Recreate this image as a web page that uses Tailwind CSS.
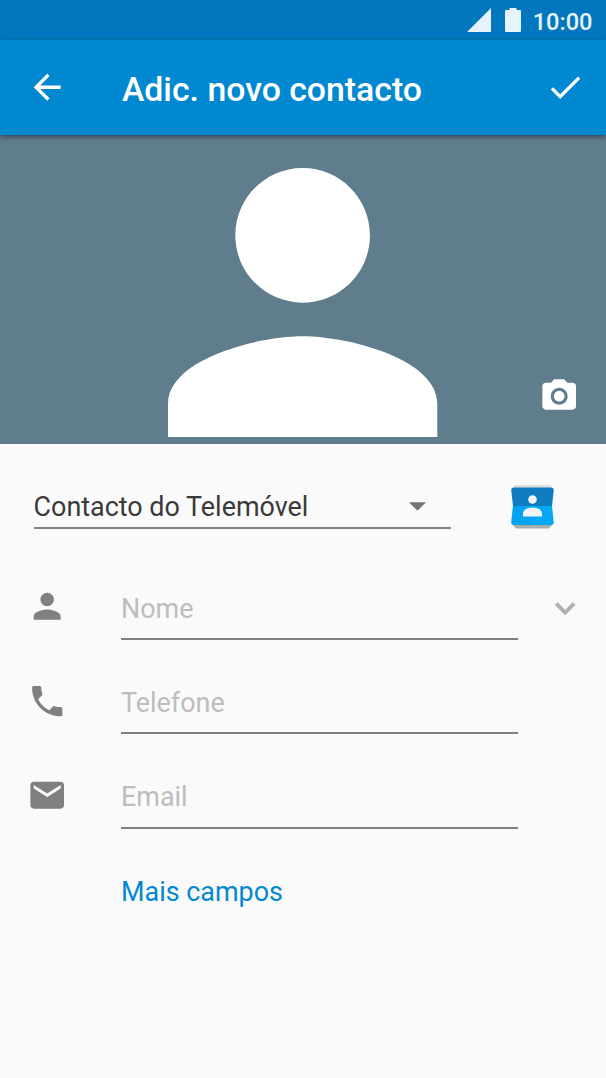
<!DOCTYPE html>
<html lang="pt">
<head>
    <meta charset="UTF-8">
    <meta name="viewport" content="width=device-width, initial-scale=1.0">
    <title>Adic. novo contacto</title>
    <script src="https://cdn.jsdelivr.net/npm/@tailwindcss/browser@4"></script>
</head>
<body class="bg-[#fafafa] font-[Roboto,sans-serif] text-[26.93px] overflow-hidden">

    <div class="w-[606px] h-[1078px] flex flex-col">

        <!-- Status bar -->
        <div class="h-10 shrink-0 bg-[#0277bd] flex items-center justify-end pr-[13.5px] text-[#e6f3fb]">
            <svg class="w-6 h-6 mr-[14px]" viewBox="0 0 24 24" fill="currentColor"><path d="M24 0v24H0z"/></svg>
            <svg class="w-4 h-6 mr-3" viewBox="0 0 16 24" fill="currentColor"><path d="M4.500 0h7v2H15a1 1 0 0 1 1 1v20a1 1 0 0 1-1 1H1a1 1 0 0 1-1-1V3a1 1 0 0 1 1-1h3.500z"/></svg>
            <span class="text-[23.57px] leading-10 font-medium pt-[3px]">10:00</span>
        </div>

        <!-- App bar -->
        <header class="relative z-10 h-[94.5px] shrink-0 bg-[#0288d1] text-white flex items-center pl-[27px] pr-[20.5px] shadow-[0_2px_5px_rgba(0,0,0,0.45)]">
            <button class="mr-[54.5px]">
                <svg class="w-[40.4px] h-[40.4px]" viewBox="0 0 24 24" fill="currentColor"><path d="M20 11H7.830l5.590-5.590L12 4l-8 8 8 8 1.410-1.410L7.830 13H20v-2z"/></svg>
            </button>
            <h1 class="flex-1 text-[33.8px] leading-10 font-medium pt-[6px] whitespace-nowrap">Adic. novo contacto</h1>
            <button>
                <svg class="w-[40.4px] h-[40.4px]" viewBox="0 0 24 24" fill="currentColor"><path d="M9 16.170L4.830 12l-1.420 1.410L9 19 21 7l-1.410-1.410z"/></svg>
            </button>
        </header>

        <!-- Photo -->
        <div class="relative h-[309px] shrink-0 bg-[#607d8d] flex justify-center pt-[33.5px]">
            <svg class="w-[269.3px] h-[269.3px]" viewBox="4 4 16 16" fill="#fff"><path d="M12 12c2.210 0 4-1.790 4-4s-1.790-4-4-4-4 1.790-4 4 1.790 4 4 4zm0 2c-2.670 0-8 1.340-8 4v2h16v-2c0-2.660-5.330-4-8-4z"/></svg>
            <button class="absolute right-[27px] bottom-[27px] text-white">
                <svg class="w-[40.4px] h-[40.4px]" viewBox="0 0 24 24" fill="currentColor"><circle cx="12" cy="12" r="3.200"/><path d="M9 2L7.170 4H4c-1.100 0-2 .9-2 2v12c0 1.100.9 2 2 2h16c1.100 0 2-.9 2-2V6c0-1.100-.9-2-2-2h-3.170L15 2H9zm3 15c-2.760 0-5-2.240-5-5s2.240-5 5-5 5 2.240 5 5-2.240 5-5 5z"/></svg>
            </button>
        </div>

        <!-- Account picker -->
        <div class="h-[116px] shrink-0 flex items-start pl-[33.5px] pt-[40px]">
            <div class="w-[417px] h-[45.5px] flex items-center justify-between border-b-2 border-[#848484] text-[#3a3a3a] pr-[25px]">
                <span class="leading-[44px] pt-1 whitespace-nowrap">Contacto do Telemóvel</span>
                <svg class="w-[17px] h-[9px] mt-[3px]" viewBox="0 0 10 5" fill="#757575"><path d="M0 0h10L5 5z"/></svg>
            </div>
            <svg class="w-[45px] h-[46px] ml-[59px]" viewBox="0 0 45 46">
                <path d="M5 1h35l3 4H2z" fill="#dedede"/>
                <path d="M2 40h41l-4 4.500H6z" fill="#a9adb0"/>
                <path d="M4 3.500h37q3 0 2.700 3L42 22H3L1.300 6.500Q1 3.500 4 3.500z" fill="#0f7bc1"/>
                <path d="M3 22h39l1.700 16q.3 3-2.700 3H4q-3 0-2.700-3z" fill="#03a9f4"/>
                <path d="M3 22h10l10 10v9H4q-3 0-2.700-3z" fill="#039be5" opacity=".35"/>
                <circle cx="22.500" cy="15.500" r="4.300" fill="#f1f5f7"/>
                <path d="M13 32.500v-3c0-3.600 4-6 9.500-6s9.500 2.400 9.500 6v3z" fill="#f1f5f7"/>
            </svg>
        </div>

        <!-- Fields -->
        <div class="flex flex-col text-[#bdbdbd]">
            <div class="h-[94.25px] flex items-center pl-[27px] pr-[20.5px]">
                <svg class="w-[40.4px] h-[40.4px]" viewBox="0 0 24 24" fill="#808080"><path d="M12 12c2.210 0 4-1.790 4-4s-1.790-4-4-4-4 1.790-4 4 1.790 4 4 4zm0 2c-2.670 0-8 1.340-8 4v2h16v-2c0-2.660-5.330-4-8-4z"/></svg>
                <div class="self-start mt-[17.5px] ml-[53.6px] w-[397.5px] h-[63px] leading-[64px] border-b-2 border-[#808080]">Nome</div>
                <svg class="w-[40.4px] h-[40.4px] ml-auto mt-1" viewBox="0 0 24 24" fill="#b0b0b0"><path d="M16.590 8.590L12 13.170 7.410 8.590 6 10l6 6 6-6z" stroke="#b0b0b0" stroke-width=".4"/></svg>
            </div>
            <div class="h-[94.25px] flex items-center pl-[27px]">
                <svg class="w-[40.4px] h-[40.4px]" viewBox="0 0 24 24" fill="#808080"><path d="M6.620 10.790c1.440 2.830 3.760 5.140 6.590 6.590l2.200-2.200c.27-.27.67-.36 1.020-.24 1.120.37 2.330.57 3.570.57.55 0 1 .45 1 1V20c0 .55-.45 1-1 1-9.390 0-17-7.610-17-17 0-.55.45-1 1-1h3.500c.55 0 1 .45 1 1 0 1.250.2 2.450.57 3.570.11.35.03.74-.25 1.020l-2.200 2.200z"/></svg>
                <div class="self-start mt-[17.5px] ml-[53.6px] w-[397.5px] h-[63px] leading-[65px] border-b-2 border-[#808080]">Telefone</div>
            </div>
            <div class="h-[94.25px] flex items-center pl-[27px]">
                <svg class="w-[40.4px] h-[40.4px]" viewBox="0 0 24 24" fill="#808080"><path d="M20 4H4c-1.100 0-1.990.9-1.990 2L2 18c0 1.100.9 2 2 2h16c1.100 0 2-.9 2-2V6c0-1.100-.9-2-2-2zm0 4l-8 5-8-5V6l8 5 8-5v2z"/></svg>
                <div class="self-start mt-[17.5px] ml-[53.6px] w-[397.5px] h-[63px] leading-[63px] border-b-2 border-[#808080]">Email</div>
            </div>
            <a href="#" class="ml-[121px] mt-[19px] leading-[63px] text-[#0288d1]">Mais campos</a>
        </div>

    </div>

</body>
</html>
